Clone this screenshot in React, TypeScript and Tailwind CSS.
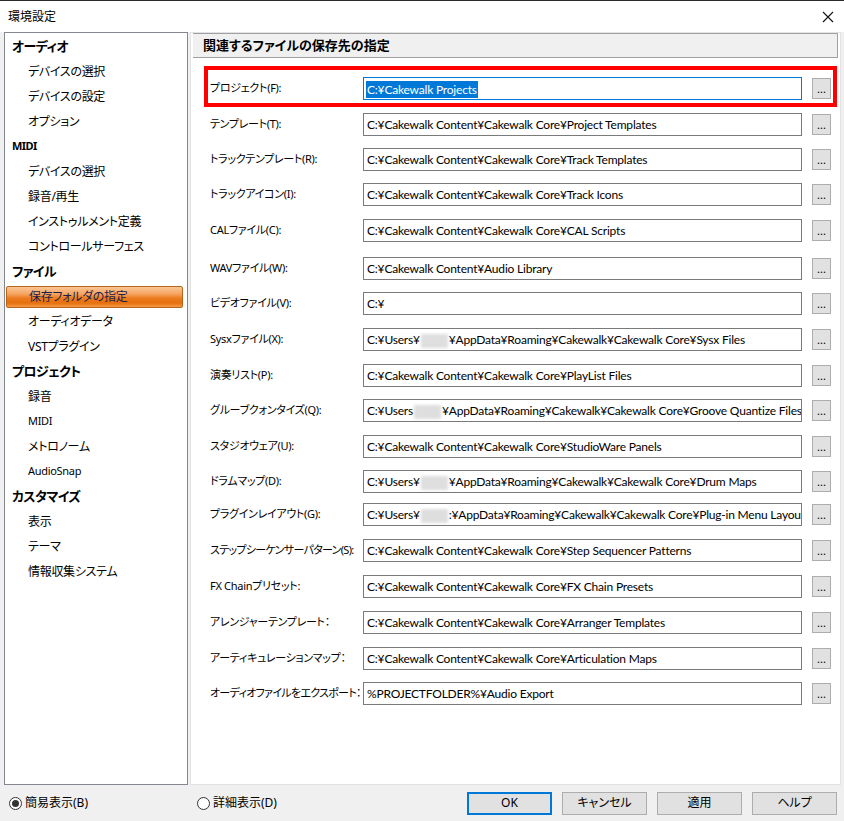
import React from "react";

type PathRow = { label: string; value: React.ReactNode; h: string; tight?: boolean };

const Blur: React.FC = () => (
  <span className="inline-block w-[27px] h-[14px] align-middle bg-[#dedede] blur-[1.5px] mx-[1px]" />
);

const rows: PathRow[] = [
  { label: "テンプレート(T):", value: "C:¥Cakewalk Content¥Cakewalk Core¥Project Templates", h: "h-[35px]" },
  { label: "トラックテンプレート(R):", value: "C:¥Cakewalk Content¥Cakewalk Core¥Track Templates", h: "h-[35px]" },
  { label: "トラックアイコン(I):", value: "C:¥Cakewalk Content¥Cakewalk Core¥Track Icons", h: "h-[36px]" },
  { label: "CALファイル(C):", value: "C:¥Cakewalk Content¥Cakewalk Core¥CAL Scripts", h: "h-[38px]" },
  { label: "WAVファイル(W):", value: "C:¥Cakewalk Content¥Audio Library", h: "h-[35px]" },
  { label: "ビデオファイル(V):", value: "C:¥", h: "h-[36px]" },
  {
    label: "Sysxファイル(X):",
    value: (
      <>
        C:¥Users¥<Blur />¥AppData¥Roaming¥Cakewalk¥Cakewalk Core¥Sysx Files
      </>
    ),
    h: "h-[36px]",
  },
  { label: "演奏リスト(P):", value: "C:¥Cakewalk Content¥Cakewalk Core¥PlayList Files", h: "h-[35px]" },
  {
    label: "グルーブクォンタイズ(Q):",
    value: (
      <>
        C:¥Users<Blur />¥AppData¥Roaming¥Cakewalk¥Cakewalk Core¥Groove Quantize Files
      </>
    ),
    h: "h-[36px]",
  },
  { label: "スタジオウェア(U):", value: "C:¥Cakewalk Content¥Cakewalk Core¥StudioWare Panels", h: "h-[35px]" },
  {
    label: "ドラムマップ(D):",
    value: (
      <>
        C:¥Users¥<Blur />¥AppData¥Roaming¥Cakewalk¥Cakewalk Core¥Drum Maps
      </>
    ),
    h: "h-[33px]",
  },
  {
    label: "プラグインレイアウト(G):",
    value: (
      <>
        C:¥Users¥<Blur />:¥AppData¥Roaming¥Cakewalk¥Cakewalk Core¥Plug-in Menu Layouts
      </>
    ),
    h: "h-[36px]",
  },
  { label: "ステップシーケンサーパターン(S):", value: "C:¥Cakewalk Content¥Cakewalk Core¥Step Sequencer Patterns", h: "h-[36px]", tight: true },
  { label: "FX Chainプリセット:", value: "C:¥Cakewalk Content¥Cakewalk Core¥FX Chain Presets", h: "h-[36px]" },
  { label: "アレンジャーテンプレート：", value: "C:¥Cakewalk Content¥Cakewalk Core¥Arranger Templates", h: "h-[36px]" },
  { label: "アーティキュレーションマップ：", value: "C:¥Cakewalk Content¥Cakewalk Core¥Articulation Maps", h: "h-[35px]" },
  { label: "オーディオファイルをエクスポート：", value: "%PROJECTFOLDER%¥Audio Export", h: "h-[35px]", tight: true },
];

const tree: { text: string; head?: boolean; selected?: boolean; small?: boolean }[] = [
  { text: "オーディオ", head: true },
  { text: "デバイスの選択" },
  { text: "デバイスの設定" },
  { text: "オプション" },
  { text: "MIDI", head: true, small: true },
  { text: "デバイスの選択" },
  { text: "録音/再生" },
  { text: "インストゥルメント定義" },
  { text: "コントロールサーフェス" },
  { text: "ファイル", head: true },
  { text: "保存フォルダの指定", selected: true },
  { text: "オーディオデータ" },
  { text: "VSTプラグイン" },
  { text: "プロジェクト", head: true },
  { text: "録音" },
  { text: "MIDI", small: true },
  { text: "メトロノーム" },
  { text: "AudioSnap", small: true },
  { text: "カスタマイズ", head: true },
  { text: "表示" },
  { text: "テーマ" },
  { text: "情報収集システム" },
];

const BrowseButton: React.FC = () => (
  <button className="ml-[10px] w-[19px] h-[21px] mt-[1px] shrink-0 border border-[#adadad] bg-[#e1e1e1] text-[11px] leading-none flex items-end justify-center pb-[4px]">
    ...
  </button>
);

const Radio: React.FC<{ checked?: boolean; label: string }> = ({ checked, label }) => (
  <label className="flex items-center gap-[3px] text-[12px] text-black">
    <span className="w-[13px] h-[13px] rounded-full border border-[#333] bg-white flex items-center justify-center">
      {checked && <span className="w-[7px] h-[7px] rounded-full bg-[#333]" />}
    </span>
    {label}
  </label>
);

const App: React.FC = () => {
  return (
    <div className="w-[844px] h-[821px] flex flex-col bg-[#f0f0f0] border-t border-[#2b2b2b] font-['Noto_Sans','Noto_Sans_CJK_JP',sans-serif] [font-feature-settings:'palt'] text-black overflow-hidden">
      {/* title bar */}
      <div className="h-[31px] bg-white flex items-center justify-between pl-[8px] pr-[9px] shrink-0">
        <span className="text-[12px]">環境設定</span>
        <svg width="12" height="12" viewBox="0 0 12 12" className="mr-[1px]">
          <path d="M1 1L11 11M11 1L1 11" stroke="#111" strokeWidth="1.1" />
        </svg>
      </div>

      <div className="flex flex-1 min-h-0 pl-[4px] pr-[3px]">
        {/* tree */}
        <div className="w-[184px] h-[753px] bg-white border border-[#828790] pt-[1px]">
          {tree.map((t, i) =>
            t.selected ? (
              <div key={i} className="h-[25px] flex items-center pl-[1px] pr-[4px]">
                <div className="w-full h-[22px] flex items-center pl-[22px] border border-[#b8651a] rounded-[2px] bg-[linear-gradient(to_bottom,#fbc796_0%,#f5a461_35%,#ec7c20_55%,#e5700c_80%,#f59a45_100%)] text-[12px] tracking-[-0.3px] text-[#1c1c4a]">
                  {t.text}
                </div>
              </div>
            ) : (
              <div
                key={i}
                className={
                  "h-[25px] flex items-center " +
                  (t.head ? "pl-[7px] font-bold tracking-[-0.6px] " : "pl-[23px] tracking-[-0.3px] ") +
                  (t.small ? "text-[11px]" : t.head ? "text-[13px]" : "text-[12px]")
                }
              >
                {t.text}
              </div>
            )
          )}
        </div>

        {/* content */}
        <div className="ml-[2px] flex-1 h-[753px] bg-white border border-[#e3e3e3] flex flex-col">
          <div className="mx-[2px] h-[25px] bg-[#f0f0f0] border-y border-r border-[#a0a0a0] flex items-center pl-[10px] text-[13px] font-bold">
            関連するファイルの保存先の指定
          </div>

          <div className="ml-[13px] mt-[8px] w-[633px] h-[41px] border-4 border-[#ff0000] pl-[2px] pt-[7px]">
            <div className="flex">
              <div className="w-[153px] h-[23px] flex items-center text-[11px] tracking-[-0.3px]">プロジェクト(F):</div>
              <div className="w-[439px] h-[23px] border border-[#0078d7] bg-white pl-[2px] leading-[21px] text-[12px] tracking-[-0.2px] font-['Lato','Noto_Sans_CJK_JP',sans-serif] overflow-hidden whitespace-nowrap">
                <span className="inline-block bg-[#0078d7] text-white px-[1px] leading-[17px] align-middle">C:¥Cakewalk Projects</span>
              </div>
              <BrowseButton />
            </div>
          </div>

          <div className="mt-[6px] pl-[19px]">
            {rows.map((r, i) => (
              <div key={i} className={r.h}>
                <div className="flex">
                  <div
                    className={
                      "w-[153px] h-[23px] shrink-0 flex items-center text-[11px] whitespace-nowrap " +
                      (r.tight ? "tracking-[-0.7px]" : "tracking-[-0.3px]")
                    }
                  >
                    {r.label}
                  </div>
                  <div className="w-[439px] h-[23px] shrink-0 border border-[#7a7a7a] bg-white pl-[3px] leading-[21px] text-[12px] tracking-[-0.2px] font-['Lato','Noto_Sans_CJK_JP',sans-serif] overflow-hidden whitespace-nowrap">
                    {r.value}
                  </div>
                  <BrowseButton />
                </div>
              </div>
            ))}
          </div>
        </div>
      </div>

      {/* bottom bar */}
      <div className="h-[36px] shrink-0 flex items-center pl-[9px] pr-[7px]">
        <div className="w-[188px]">
          <Radio checked label="簡易表示(B)" />
        </div>
        <Radio label="詳細表示(D)" />
        <div className="ml-auto flex gap-[10px]">
          <button className="w-[85px] h-[23px] border-2 border-[#0078d7] bg-[#e1e1e1] text-[12px]">OK</button>
          <button className="w-[85px] h-[23px] border border-[#adadad] bg-[#e1e1e1] text-[12px]">キャンセル</button>
          <button className="w-[85px] h-[23px] border border-[#adadad] bg-[#e1e1e1] text-[12px]">適用</button>
          <button className="w-[85px] h-[23px] border border-[#adadad] bg-[#e1e1e1] text-[12px]">ヘルプ</button>
        </div>
      </div>
    </div>
  );
};

export default App;
